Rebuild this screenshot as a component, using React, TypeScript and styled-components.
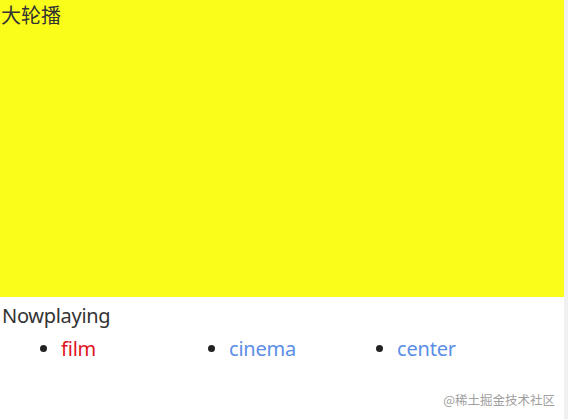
import React from "react";
import styled, { createGlobalStyle } from "styled-components";

const Global = createGlobalStyle`
  html, body { margin: 0; padding: 0; background: #ffffff; }
  body {
    font-family: "Noto Sans", "Noto Sans CJK SC", sans-serif;
    color: #333333;
  }
`;

const Page = styled.div`
  display: flex;
  width: 568px;
  height: 419px;
  overflow: hidden;
`;

const Main = styled.div`
  position: relative;
  width: 564px;
  display: flex;
  flex-direction: column;
`;

const Gutter = styled.div`
  width: 4px;
  background: #f0f0f0;
`;

const Banner = styled.div`
  height: 297px;
  background: #fafc19;
  font-size: 20px;
  line-height: 30px;
  padding-left: 1px;
  font-family: "Noto Sans CJK SC", sans-serif;
`;

const Title = styled.div`
  font-size: 20px;
  line-height: 26px;
  padding: 6px 0 0 2px;
  letter-spacing: -0.3px;
`;

const Tabs = styled.ul`
  display: flex;
  margin: 7px 0 0;
  padding: 0 0 0 61px;
  list-style: disc;
`;

const Tab = styled.li<{ $active?: boolean }>`
  flex: 0 0 168px;
  font-size: 20px;
  line-height: 26px;
  letter-spacing: -0.2px;
  color: ${(p) => (p.$active ? "#e0141e" : "#5b8ee6")};
  &::marker {
    color: #222222;
  }
`;

const Watermark = styled.div`
  position: absolute;
  right: 9px;
  bottom: 10px;
  font-size: 12.5px;
  color: #a0a0a0;
  font-family: "Noto Sans CJK SC", sans-serif;
`;

export default function App() {
  return (
    <Page>
      <Global />
      <Main>
        <Banner>大轮播</Banner>
        <Title>Nowplaying</Title>
        <Tabs>
          <Tab $active>film</Tab>
          <Tab>cinema</Tab>
          <Tab>center</Tab>
        </Tabs>
        <Watermark>@稀土掘金技术社区</Watermark>
      </Main>
      <Gutter />
    </Page>
  );
}
